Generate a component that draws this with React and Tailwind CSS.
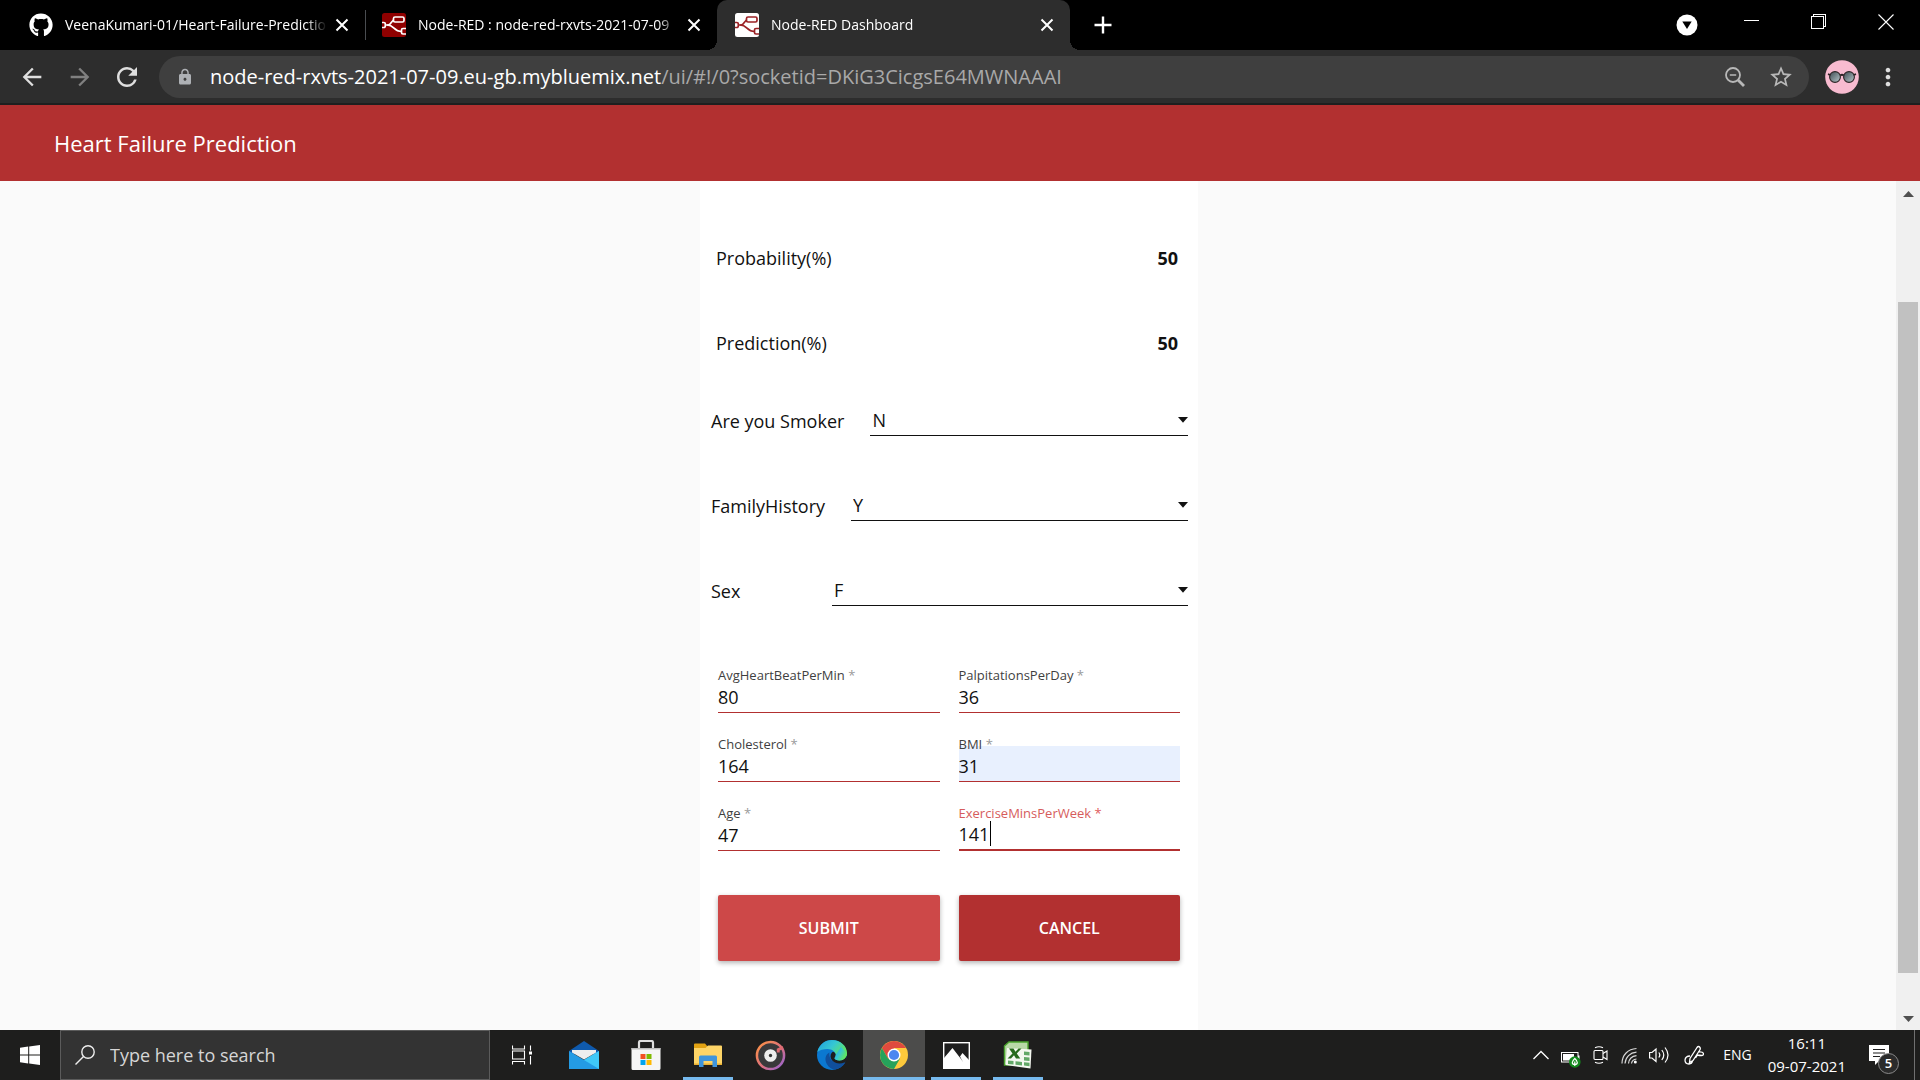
import React from 'react';
import { FaGithub } from 'react-icons/fa6';
import { MdArrowBack, MdArrowForward, MdRefresh, MdLock, MdStarBorder, MdMoreVert } from 'react-icons/md';

function NodeRedIcon({ bg, fg, line }) {
  return (
    <svg viewBox="0 0 24 24" className="h-6 w-6 shrink-0" aria-hidden="true">
      <rect width="24" height="24" rx="2.5" fill={bg} />
      <g fill="none" stroke={line} strokeWidth="1.7">
        <path d="M3.5 12H6c3.5 0 3.500-5.500 7-5.500" />
        <path d="M5 12c8 0 6 6.500 14.500 6.500" />
        <rect x="11.500" y="4" width="10.500" height="5" rx="1.500" fill={fg} />
        <path d="M0 9.500h1.800a1.500 1.500 0 0 1 1.500 1.500v2a1.500 1.500 0 0 1-1.500 1.500H0" fill={fg} />
        <path d="M24 15.500h-3a1.500 1.500 0 0 0-1.500 1.500v2.500a1.500 1.500 0 0 0 1.500 1.500h3" fill={fg} />
      </g>
    </svg>
  );
}

function CloseTab() {
  return (
    <button aria-label="Close tab" className="-ml-2 shrink-0 px-1">
      <svg viewBox="0 0 14 14" className="h-3.5 w-3.5" fill="none" stroke="currentColor" strokeWidth="2" aria-hidden="true">
        <path d="M1.500 1.500l11 11M12.500 1.500l-11 11" />
      </svg>
    </button>
  );
}

function TabTitle({ children }) {
  return (
    <span className="min-w-0 flex-1 overflow-hidden whitespace-nowrap text-sm text-white [mask-image:linear-gradient(to_right,black_92%,transparent)]">
      {children}
    </span>
  );
}

function TabStrip() {
  return (
    <header className="flex h-[50px] shrink-0 items-center bg-black text-white">
      <div className="flex h-full w-[365px] items-center gap-3 pr-3 pl-[29px]">
        <FaGithub className="h-6 w-6 shrink-0" />
        <TabTitle>VeenaKumari-01/Heart-Failure-Prediction</TabTitle>
        <CloseTab />
      </div>
      <div className="h-[30px] w-px bg-[#4a4d51]" />
      <div className="flex h-full w-[351px] items-center gap-3 pr-3 pl-4">
        <NodeRedIcon bg="#8f0000" fg="#8f0000" line="#ffffff" />
        <TabTitle>Node-RED : node-red-rxvts-2021-07-09</TabTitle>
        <CloseTab />
      </div>
      <div className="relative flex h-full w-[353px] items-center gap-3 rounded-t-[10px] bg-[#2d2d2d] pr-3 pl-[18px] before:absolute before:bottom-0 before:-left-2.5 before:h-2.5 before:w-2.5 before:bg-[radial-gradient(circle_at_0_0,transparent_10px,#2d2d2d_10px)] after:absolute after:-right-2.5 after:bottom-0 after:h-2.5 after:w-2.5 after:bg-[radial-gradient(circle_at_100%_0,transparent_10px,#2d2d2d_10px)]">
        <NodeRedIcon bg="#ffffff" fg="#ffffff" line="#9b2226" />
        <TabTitle>Node-RED Dashboard</TabTitle>
        <CloseTab />
      </div>
      <button aria-label="New tab" className="ml-6">
        <svg viewBox="0 0 18 18" className="h-[18px] w-[18px]" stroke="currentColor" strokeWidth="2.4" aria-hidden="true">
          <path d="M9 0.500v17M0.500 9h17" />
        </svg>
      </button>
      <div className="ml-auto flex items-center">
        <button aria-label="Search tabs" className="mr-[46px]">
          <svg viewBox="0 0 22 22" className="h-[22px] w-[22px]" aria-hidden="true">
            <circle cx="11" cy="11" r="10.500" fill="#fff" />
            <path d="M6.300 7.500h9.400L11 15z" fill="#000" />
          </svg>
        </button>
        <button aria-label="Minimize" className="mr-[51px] pb-2">
          <svg viewBox="0 0 16 16" className="h-4 w-4" shapeRendering="crispEdges" aria-hidden="true"><rect y="7" width="15" height="1" fill="#fff" /></svg>
        </button>
        <button aria-label="Restore" className="mr-[51px] pb-1.5">
          <svg viewBox="0 0 16 16" className="h-4 w-4" fill="none" stroke="#fff" shapeRendering="crispEdges" aria-hidden="true">
            <path d="M0.500 2.500h12v12h-12zM2.500 2.500v-2h12v12h-2" />
          </svg>
        </button>
        <button aria-label="Close" className="mr-[26px] pb-1.5">
          <svg viewBox="0 0 16 16" className="h-4 w-4" fill="none" stroke="#fff" strokeWidth="1.100" aria-hidden="true"><path d="M0.500 0.500l15 15M15.500 0.500l-15 15" /></svg>
        </button>
      </div>
    </header>
  );
}

function AddressBar() {
  return (
    <nav className="flex h-[55px] shrink-0 items-center border-b-2 border-[#1f1f1f] bg-[#2d2d2d] pl-[18px] text-[#dedede]">
      <button aria-label="Back"><MdArrowBack className="h-7 w-7" /></button>
      <button aria-label="Forward" className="ml-5 text-[#808080]"><MdArrowForward className="h-7 w-7" /></button>
      <button aria-label="Reload" className="ml-[18px]"><MdRefresh className="h-[30px] w-[30px]" /></button>
      <div className="ml-[17px] flex h-[42px] flex-1 items-center rounded-full bg-[#3f3f3f] pr-[15px] pl-[17px]">
        <MdLock className="h-[18px] w-[18px] shrink-0 text-[#aeb1b5]" />
        <div role="textbox" aria-label="Address" className="ml-4 min-w-0 flex-1 whitespace-nowrap text-xl leading-6 text-[#a9a9a9]">
          <span className="text-white">node-red-rxvts-2021-07-09.eu-gb.mybluemix.net</span>/ui/#!/0?socketid=DKiG3CicgsE64MWNAAAI
        </div>
        <button aria-label="Zoom" className="mr-[23px] text-[#b8b8b8]">
          <svg viewBox="0 0 20 20" className="h-5 w-5" fill="none" stroke="currentColor" strokeWidth="1.800" aria-hidden="true">
            <circle cx="8" cy="8" r="7" />
            <path d="M4.800 8h6.400" strokeWidth="1.500" />
            <path d="M13 13l6 6" strokeWidth="2.800" />
          </svg>
        </button>
        <button aria-label="Bookmark this tab" className="text-[#b8b8b8]"><MdStarBorder className="h-[26px] w-[26px]" /></button>
      </div>
      <button aria-label="Profile" className="ml-4">
        <svg viewBox="0 0 34 34" className="h-[34px] w-[34px]" aria-hidden="true">
          <defs>
            <linearGradient id="lens" x1="0" y1="0" x2="1" y2="1">
              <stop offset="0" stopColor="#3d4a50" />
              <stop offset="1" stopColor="#b9c8cc" />
            </linearGradient>
          </defs>
          <circle cx="17" cy="17" r="16.800" fill="#f8bbd0" />
          <g stroke="#2d2426" strokeWidth="1.100">
            <circle cx="10" cy="17" r="5.400" fill="url(#lens)" />
            <circle cx="24" cy="17" r="5.400" fill="url(#lens)" />
            <path d="M3 14.200l2.500.8M31 14.200l-2.500.8M15.200 15.500q1.800-1.500 3.600 0" fill="none" strokeWidth="1.800" />
          </g>
        </svg>
      </button>
      <button aria-label="Menu" className="mr-[18px] ml-[15px]"><MdMoreVert className="h-7 w-7" /></button>
    </nav>
  );
}

function Reading({ label, value }) {
  return (
    <div className="flex h-[85px] items-center justify-between pr-5 pl-4">
      <span>{label}</span>
      <span className="font-bold">{value}</span>
    </div>
  );
}

function Choice({ id, label, value, options }) {
  return (
    <div className="flex h-[85px] items-center gap-[26px] pr-2.5 pb-3.5 pl-[11px]">
      <label htmlFor={id} className="min-w-[95px]">{label}</label>
      <div className="relative flex-1">
        <select id={id} defaultValue={value} className="block h-[30px] w-full appearance-none border-b border-[#111] bg-transparent pr-4 pl-0.5 outline-none">
          {options.map((o) => <option key={o}>{o}</option>)}
        </select>
        <svg viewBox="0 0 10 6" className="pointer-events-none absolute top-[11px] right-0 h-1.5 w-2.5" aria-hidden="true"><path d="M0 0h10L5 5.800z" fill="#111" /></svg>
      </div>
    </div>
  );
}

function Field({ id, label, value, filled, active }) {
  return (
    <div className="relative">
      <label htmlFor={id} className={active ? 'relative z-10 -mb-1.5 block text-[13px] leading-4 text-[#d65c5c]' : 'relative z-10 -mb-1.5 block text-[13px] leading-4 text-[#3f3f3f]'}>
        {label} <span className={active ? 'text-[#e05a5a]' : 'text-[#9a9a9a]'}>*</span>
      </label>
      <input
        id={id}
        type="text"
        defaultValue={value}
        className={
          active
            ? 'block h-9 w-full border-b-2 border-[#b23030] bg-transparent pt-1 outline-none'
            : filled
              ? 'block h-9 w-full border-b border-[#b23030] bg-[#e8f0fe] pt-1 outline-none'
              : 'block h-9 w-full border-b border-[#b23030] bg-transparent pt-1 outline-none'
        }
      />
      {active && <span className="absolute bottom-[5px] left-[31px] h-[25px] w-px bg-black" />}
    </div>
  );
}

const YES_NO = ['Y', 'N'];

function Dashboard() {
  return (
    <>
      <div className="flex h-[76px] shrink-0 items-center bg-[#b23030] pl-[54px]">
        <h1 className="text-[22px] text-white">Heart Failure Prediction</h1>
      </div>
      <div className="flex min-h-0 flex-1 bg-[#fafafa]">
        <main className="flex min-w-0 flex-1 justify-center pl-0.5">
          <section className="w-[498px] bg-white pt-[34px] text-lg text-[#111]">
            <Reading label="Probability(%)" value="50" />
            <Reading label="Prediction(%)" value="50" />
            <Choice id="smoker" label="Are you Smoker" value="N" options={YES_NO} />
            <Choice id="family" label="FamilyHistory" value="Y" options={YES_NO} />
            <Choice id="sex" label="Sex" value="F" options={['F', 'M']} />
            <form className="px-[18px] pt-[27px]" onSubmit={(e) => e.preventDefault()}>
              <div className="grid grid-cols-2 gap-x-[19px] gap-y-[23px]">
                <Field id="heartbeat" label="AvgHeartBeatPerMin" value="80" />
                <Field id="palpitations" label="PalpitationsPerDay" value="36" />
                <Field id="cholesterol" label="Cholesterol" value="164" />
                <Field id="bmi" label="BMI" value="31" filled />
                <Field id="age" label="Age" value="47" />
                <Field id="exercise" label="ExerciseMinsPerWeek" value="141" active />
              </div>
              <div className="mt-11 grid grid-cols-2 gap-x-[19px] text-base font-semibold text-white">
                <button type="submit" className="h-[66px] rounded-xs bg-[#cd4848] shadow-[0_2px_5px_rgba(0,0,0,0.3)]">SUBMIT</button>
                <button type="button" className="h-[66px] rounded-xs bg-[#b23030] shadow-[0_2px_5px_rgba(0,0,0,0.3)]">CANCEL</button>
              </div>
            </form>
          </section>
        </main>
        <div className="flex w-6 shrink-0 flex-col items-center bg-[#f0f0f0] pt-2.5 pb-2">
          <svg viewBox="0 0 11 6" className="h-1.5 w-[11px]" aria-hidden="true"><path d="M0 6L5.500 0 11 6z" fill="#505050" /></svg>
          <div className="mt-[105px] mb-[43px] w-5 flex-1 bg-[#c1c1c1]" />
          <svg viewBox="0 0 11 6" className="h-1.5 w-[11px]" aria-hidden="true"><path d="M0 0L5.500 6 11 0z" fill="#505050" /></svg>
        </div>
      </div>
    </>
  );
}

function TaskViewIcon() {
  return (
    <svg viewBox="0 0 20 20" className="h-5 w-5" fill="none" stroke="#fff" strokeWidth="1.100" aria-hidden="true">
      <path d="M0.500 0.500v3.500h12V0.500M0.500 6h12v8h-12zM0.500 19.500v-3h12v3M18.500 0.500v5M18.500 11v8.500" />
      <rect x="17" y="6.500" width="3" height="3" fill="#fff" stroke="none" />
    </svg>
  );
}

function MailIcon() {
  return (
    <svg viewBox="0 0 30 28" className="h-7 w-[30px]" aria-hidden="true">
      <path d="M0 10L15 0l15 10v3H0z" fill="#0f5aad" />
      <path d="M0 10l15 9L30 10v18H0z" fill="#249be4" />
      <path d="M30 10L15 19l15 9z" fill="#3fc8f7" />
      <path d="M3 9h24v2.500L15 18.500 3 11.500z" fill="#eeeeee" />
    </svg>
  );
}

function StoreIcon() {
  return (
    <svg viewBox="0 0 30 30" className="h-[30px] w-[30px]" aria-hidden="true">
      <path d="M8 10V2.500A1.500 1.500 0 0 1 9.500 1h11A1.500 1.500 0 0 1 22 2.500V10" fill="none" stroke="#dedede" strokeWidth="2.200" />
      <path d="M0.500 8h29v20.500a1.500 1.500 0 0 1-1.500 1.500H2a1.500 1.500 0 0 1-1.500-1.500z" fill="#f5f5f5" />
      <path d="M0.500 8h29v1.500h-29z" fill="#bcbcbc" />
      <rect x="9.500" y="14" width="5" height="5" fill="#f25022" />
      <rect x="15.500" y="14" width="5" height="5" fill="#7fba00" />
      <rect x="9.500" y="20" width="5" height="5" fill="#00a4ef" />
      <rect x="15.500" y="20" width="5" height="5" fill="#ffb900" />
    </svg>
  );
}

function ExplorerIcon() {
  return (
    <svg viewBox="0 0 28 24" className="h-6 w-7" aria-hidden="true">
      <path d="M0 1.500A1 1 0 0 1 1 .5h10l2.500 3H27a1 1 0 0 1 1 1V8H0z" fill="#e2a212" />
      <path d="M0 5h11.500l2.500-2.500H27a1 1 0 0 1 1 1V22H0z" fill="#fdd467" />
      <path d="M0 20.500h28V22H0z" fill="#e9b030" />
      <path d="M5 24V14a1.500 1.500 0 0 1 1.500-1.500h15A1.500 1.500 0 0 1 23 14v10h-4.500v-6h-9v6z" fill="#3d94dc" />
    </svg>
  );
}

function GrooveIcon() {
  return (
    <svg viewBox="0 0 32 32" className="h-[31px] w-[31px]" aria-hidden="true">
      <defs>
        <linearGradient id="groove" x1="0" y1="0" x2="1" y2="1">
          <stop offset="0" stopColor="#ff9440" />
          <stop offset="0.550" stopColor="#dc7080" />
          <stop offset="1" stopColor="#8f62d8" />
        </linearGradient>
      </defs>
      <circle cx="16" cy="16" r="14" fill="#39393b" stroke="url(#groove)" strokeWidth="2.600" />
      <path d="M24 13v-3l5-2.500" stroke="#dc6b72" strokeWidth="3" fill="none" />
      <circle cx="16" cy="16" r="6.500" fill="#eeeeee" />
      <circle cx="16" cy="16" r="1.700" fill="#333" />
    </svg>
  );
}

function EdgeIcon() {
  return (
    <svg viewBox="0 0 30 30" className="h-[30px] w-[30px]" aria-hidden="true">
      <defs>
        <linearGradient id="edgeTop" x1="0" y1="0" x2="1" y2="0.600">
          <stop offset="0" stopColor="#1d9de0" />
          <stop offset="0.500" stopColor="#36c7d3" />
          <stop offset="1" stopColor="#66eb4e" />
        </linearGradient>
      </defs>
      <circle cx="15" cy="15" r="15" fill="#0b78d0" />
      <path d="M0.300 12C2 4.500 8 0 15 0c8.500 0 15 6 15 13 0 4.500-3.500 7.500-7.500 7.500-3 0-5-1-5-2.200 0-.8 1.200-1.300 1.200-3.300 0-3-3.500-6-8.200-6C6.500 9 2.500 10 0.300 12z" fill="url(#edgeTop)" />
      <path d="M12.300 12.500c-3.800 2-5 7-2.500 11.500C12 28 16.500 30 18.500 29.500c4-1 7.500-3.500 9.500-6.500.4-.7-.2-1.200-.8-.9-1.400.6-3 .9-5 .9-6 0-10.500-3.500-9.900-10.500z" fill="#104f9c" />
      <path d="M18.700 15c0 2-1.200 2.500-1.200 3.300 0 1.200 2 2.200 5 2.200 3.300 0 6.200-2 7.200-5L30 21l-2.500 1.500c-7 2.500-13.500-.5-14-6 0-3 1.500-4.500 2.500-4.800 1.700.5 2.700 1.800 2.700 3.300z" fill="#1e1e1e" />
      <path d="M18.700 15c0 2-1.200 2.500-1.200 3.300 0 1.200 2 2.200 5 2.200 4 0 7.500-3 7.500-7.500l-6-6z" fill="url(#edgeTop)" />
    </svg>
  );
}

function ChromeIcon() {
  return (
    <svg viewBox="0 0 28 28" className="h-7 w-7" aria-hidden="true">
      <circle cx="14" cy="14" r="14" fill="#fdc93c" />
      <path d="M1.900 7A14 14 0 0 1 26.100 7H14v7l-6 3.500z" fill="#df4a3e" />
      <path d="M1.900 7A14 14 0 0 0 14 28l6-10.500L8 17.500z" fill="#26a25b" />
      <circle cx="14" cy="14" r="6.500" fill="#fff" />
      <circle cx="14" cy="14" r="5.100" fill="#4b87f0" />
    </svg>
  );
}

function PhotosIcon() {
  return (
    <svg viewBox="0 0 27 27" className="h-[27px] w-[27px]" aria-hidden="true">
      <rect x="0.700" y="0.700" width="25.600" height="25.600" fill="#1e1e1e" stroke="#fff" strokeWidth="1.400" />
      <path d="M1 16L9.500 6l8.500 11 2 3-3-5.500L19.500 11l6.500 7v8.500H1z" fill="#fff" />
    </svg>
  );
}

function ExcelIcon() {
  return (
    <svg viewBox="0 0 30 30" className="h-[30px] w-[30px]" aria-hidden="true">
      <path d="M1.500 6L6 2h19v23H1.500z" fill="#b9d8a8" stroke="#4ba52e" strokeWidth="1.400" />
      <path d="M4 8L28.500 9.500l-1 19L2.500 25z" fill="#f4f8f0" />
      <g fill="#62a867">
        <path d="M21 11.500l5.500.5v3.500l-5.500-.4zM21 17l5.500.4v3.500l-5.500-.5zM21 22.300l5.500.5v3.500l-5.500-.7zM12.500 21.300l6.500.7v3.500l-6.500-.8zM5 20.500l5.500.6v3.500L5 23.900z" />
      </g>
      <path d="M6 8.500h4.500l2 3.300 3-3.300h3l-4.700 5 3.500 5H13l-2-3.200-3 3.200H4.500l5-5z" fill="#286b1d" />
    </svg>
  );
}

const APPS = [
  { name: 'Task View', Icon: TaskViewIcon },
  { name: 'Mail', Icon: MailIcon },
  { name: 'Microsoft Store', Icon: StoreIcon },
  { name: 'File Explorer', Icon: ExplorerIcon, open: true },
  { name: 'Groove Music', Icon: GrooveIcon },
  { name: 'Microsoft Edge', Icon: EdgeIcon },
  { name: 'Google Chrome', Icon: ChromeIcon, current: true },
  { name: 'Photos', Icon: PhotosIcon, open: true },
  { name: 'Excel', Icon: ExcelIcon, open: true },
];

function Tray() {
  return (
    <div className="ml-auto flex h-full items-center text-white">
      <svg viewBox="0 0 16 10" className="h-2.5 w-4" fill="none" stroke="#fff" strokeWidth="1.300" aria-hidden="true"><path d="M0.500 9L8 1.500 15.500 9" /></svg>
      <svg viewBox="0 0 20 17" className="mt-2 ml-3 h-[17px] w-5" aria-hidden="true">
        <rect x="0.500" y="1.500" width="16.500" height="9.500" fill="none" stroke="#fff" />
        <rect x="2" y="3" width="11" height="6.500" fill="#fff" />
        <path d="M17 4.500h1.500v3.500H17z" fill="#fff" />
        <circle cx="13.800" cy="11" r="5.800" fill="#12891c" />
        <path d="M13.800 7.500c2 2 2.500 3 2.500 4s-1 2-2.500 2-2.500-1-2.500-2 .5-2 2.500-4zM13.800 10.500v4.500" fill="none" stroke="#fff" strokeWidth="1.200" />
      </svg>
      <svg viewBox="0 0 16 18" className="ml-3 h-[18px] w-4" fill="none" stroke="#fff" strokeWidth="1.100" aria-hidden="true">
        <rect x="1" y="4.500" width="9" height="9" rx="1" />
        <path d="M10 7.500l4-2.500v8.500l-4-2.500M2 1.800q4-2 8 0M2 16.200q4 2 8 0" />
      </svg>
      <svg viewBox="0 0 16 17" className="ml-3 h-[17px] w-4" fill="none" stroke="#d8d8d8" strokeWidth="1.200" aria-hidden="true">
        <path d="M1 16.500C1 8 7 2 15.500 1.500M4 16.500C4.500 10 9 5.700 15.500 5.200M7.500 16.500C8 12 10.500 9.300 15.500 8.700M10.500 16.500c.3-2.300 2-4.200 5-4.500" />
        <circle cx="14.300" cy="15" r="1.500" fill="#fff" stroke="none" />
      </svg>
      <svg viewBox="0 0 20 18" className="ml-3 h-[18px] w-5" fill="none" stroke="#fff" strokeWidth="1.200" aria-hidden="true">
        <path d="M.6 6.500H3L7 3v12.500L3 12H.6zM9.800 6.500q2 2.500 0 5M12.800 4q4 5 0 10M16 1.500q6 7.500 0 15" />
      </svg>
      <svg viewBox="0 0 20 20" className="ml-[15px] h-5 w-5" fill="none" stroke="#fff" strokeWidth="1.300" aria-hidden="true">
        <path d="M13 2.500q1.500-2 3 0 .8 1-.5 3L9 15.500l-3.500 2 .5-4zM6 11q-4.500 0-5 4 0 4 4 4 3 0 3.500-3M14 7q5-.5 5.500 1.500.2 2-2 2t-4-.5l-2 3" />
      </svg>
      <span className="ml-[19px] text-sm">ENG</span>
      <div className="ml-4 text-center text-[15px] leading-[23px]">
        <div>16:11</div>
        <div>09-07-2021</div>
      </div>
      <button aria-label="Notifications, 5 new" className="relative mt-1 ml-[23px] flex h-6 w-[30px]">
        <svg viewBox="0 0 20 20" className="h-5 w-5" aria-hidden="true">
          <path d="M0 0h20v16H10l-4 4v-4H0z" fill="#fff" />
          <path d="M4 4.500h12M4 8h12M4 11.500h7" stroke="#1e1e1e" strokeWidth="1.200" />
        </svg>
        <span className="absolute top-2 left-[9px] flex h-[21px] w-[21px] items-center justify-center rounded-full border border-[#8a8a8a] bg-[#2b2b2b] text-[13px] font-semibold">5</span>
      </button>
      <div className="ml-[15px] h-full w-px bg-[#707070]" />
      <div className="w-[5px]" />
    </div>
  );
}

function Taskbar() {
  return (
    <footer className="flex h-[50px] shrink-0 items-center bg-[#1e1e1d]">
      <button aria-label="Start" className="flex h-full w-[60px] items-center justify-center">
        <svg viewBox="0 0 20 20" className="h-5 w-5" fill="#fff" aria-hidden="true">
          <path d="M0 2.800L8.200 1.600v7.900H0zM9.200 1.400L20 0v9.500H9.200zM0 10.500h8.200v7.900L0 17.200zM9.200 10.500H20V20L9.200 18.600z" />
        </svg>
      </button>
      <label className="flex h-full w-[430px] items-center gap-[15px] border border-[#5b5b5b] bg-[#333333] pl-3.5">
        <svg viewBox="0 0 20 20" className="h-5 w-5 shrink-0" fill="none" stroke="#eee" strokeWidth="1.400" aria-hidden="true">
          <circle cx="13" cy="7" r="6.200" />
          <path d="M8.500 11.500L.5 19.500" />
        </svg>
        <input type="text" aria-label="Search" placeholder="Type here to search" className="min-w-0 flex-1 bg-transparent text-lg outline-none placeholder:text-[#d6d6d6]" />
      </label>
      <div className="flex h-full pl-px">
        {APPS.map(({ name, Icon, open, current }) => (
          <button
            key={name}
            aria-label={name}
            className={current ? 'relative flex h-full w-[62px] items-center justify-center bg-[#4c4c4b]' : 'relative flex h-full w-[62px] items-center justify-center'}
          >
            <Icon />
            {open && <span className="absolute inset-x-1.5 bottom-0 h-[3px] bg-[#76b9ed]" />}
            {current && <span className="absolute inset-x-0 bottom-0 h-[3px] bg-[#76b9ed]" />}
          </button>
        ))}
      </div>
      <Tray />
    </footer>
  );
}

export default function App() {
  return (
    <div className="flex min-h-screen flex-col font-['Open_Sans','Noto_Sans',sans-serif]">
      <TabStrip />
      <AddressBar />
      <Dashboard />
      <Taskbar />
    </div>
  );
}
